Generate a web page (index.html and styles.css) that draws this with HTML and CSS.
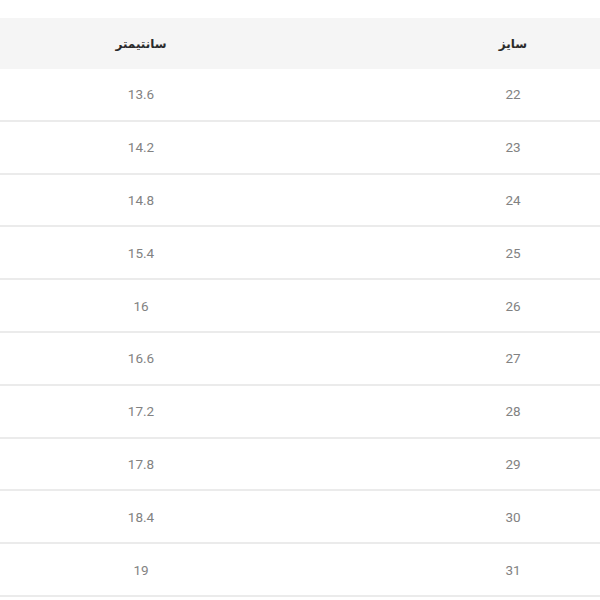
FILE: index.html
```html
<!DOCTYPE html>
<html lang="fa" dir="rtl">
<head>
<meta charset="utf-8">
<link rel="stylesheet" href="styles.css">
</head>
<body>
<div class="size-table">
  <div class="row head">
    <div class="cell size">سایز</div>
    <div class="cell"></div>
    <div class="cell cm">سانتیمتر</div>
  </div>
  <div class="row"><div class="cell size">22</div><div class="cell"></div><div class="cell cm">13.6</div></div>
  <div class="row"><div class="cell size">23</div><div class="cell"></div><div class="cell cm">14.2</div></div>
  <div class="row"><div class="cell size">24</div><div class="cell"></div><div class="cell cm">14.8</div></div>
  <div class="row"><div class="cell size">25</div><div class="cell"></div><div class="cell cm">15.4</div></div>
  <div class="row"><div class="cell size">26</div><div class="cell"></div><div class="cell cm">16</div></div>
  <div class="row"><div class="cell size">27</div><div class="cell"></div><div class="cell cm">16.6</div></div>
  <div class="row"><div class="cell size">28</div><div class="cell"></div><div class="cell cm">17.2</div></div>
  <div class="row"><div class="cell size">29</div><div class="cell"></div><div class="cell cm">17.8</div></div>
  <div class="row"><div class="cell size">30</div><div class="cell"></div><div class="cell cm">18.4</div></div>
  <div class="row"><div class="cell size">31</div><div class="cell"></div><div class="cell cm">19</div></div>
</div>
</body>
</html>
```
FILE: styles.css
```css
html, body {
  margin: 0;
  padding: 0;
  background: #ffffff;
}
body {
  font-family: Roboto, "Liberation Sans", "DejaVu Sans", sans-serif;
}
.size-table {
  padding-top: 18px;
  display: flex;
  flex-direction: column;
}
.row {
  display: grid;
  grid-template-columns: 174px 1fr 282px;
  height: 50.8px;
  border-bottom: 2px solid #ebebeb;
  align-items: center;
}
.row.head {
  height: 51px;
  background: #f5f5f5;
  border-bottom: 0;
}
.cell {
  text-align: center;
  font-size: 13.5px;
  color: #828282;
}
.head .cell {
  font-family: "DejaVu Sans", sans-serif;
  font-weight: bold;
  font-size: 12px;
  color: #2b2b2b;
}
```
